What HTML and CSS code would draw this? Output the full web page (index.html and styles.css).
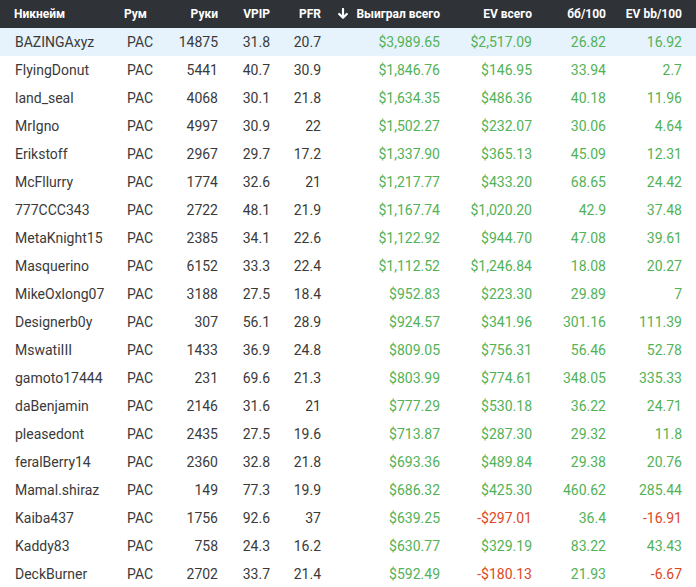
FILE: index.html
```html
<!DOCTYPE html>
<html lang="ru">
<head>
<meta charset="utf-8">
<link rel="stylesheet" href="styles.css">
</head>
<body>
<table class="stats">
<colgroup>
<col class="c-name"><col class="c-room"><col class="c-hands"><col class="c-vpip"><col class="c-pfr"><col class="c-won"><col class="c-ev"><col class="c-bb"><col class="c-evbb">
</colgroup>
<thead>
<tr>
<th class="l">Никнейм</th><th class="l">Рум</th><th>Руки</th><th>VPIP</th><th>PFR</th><th><svg class="arrow" width="10" height="11" viewBox="0 0 10 11"><path d="M5 1 V9.5 M1.2 6 L5 9.8 L8.8 6" fill="none" stroke="#ffffff" stroke-width="2.2" stroke-linecap="round" stroke-linejoin="round"/></svg>Выиграл всего</th><th>EV всего</th><th>бб/100</th><th>EV bb/100</th>
</tr>
</thead>
<tbody>
<tr class="hl"><td class="l">BAZINGAxyz</td><td class="l">PAC</td><td>14875</td><td>31.8</td><td>20.7</td><td class="g">$3,989.65</td><td class="g">$2,517.09</td><td class="g">26.82</td><td class="g">16.92</td></tr>
<tr><td class="l">FlyingDonut</td><td class="l">PAC</td><td>5441</td><td>40.7</td><td>30.9</td><td class="g">$1,846.76</td><td class="g">$146.95</td><td class="g">33.94</td><td class="g">2.7</td></tr>
<tr><td class="l">land_seal</td><td class="l">PAC</td><td>4068</td><td>30.1</td><td>21.8</td><td class="g">$1,634.35</td><td class="g">$486.36</td><td class="g">40.18</td><td class="g">11.96</td></tr>
<tr><td class="l">MrIgno</td><td class="l">PAC</td><td>4997</td><td>30.9</td><td>22</td><td class="g">$1,502.27</td><td class="g">$232.07</td><td class="g">30.06</td><td class="g">4.64</td></tr>
<tr><td class="l">Erikstoff</td><td class="l">PAC</td><td>2967</td><td>29.7</td><td>17.2</td><td class="g">$1,337.90</td><td class="g">$365.13</td><td class="g">45.09</td><td class="g">12.31</td></tr>
<tr><td class="l">McFllurry</td><td class="l">PAC</td><td>1774</td><td>32.6</td><td>21</td><td class="g">$1,217.77</td><td class="g">$433.20</td><td class="g">68.65</td><td class="g">24.42</td></tr>
<tr><td class="l">777CCC343</td><td class="l">PAC</td><td>2722</td><td>48.1</td><td>21.9</td><td class="g">$1,167.74</td><td class="g">$1,020.20</td><td class="g">42.9</td><td class="g">37.48</td></tr>
<tr><td class="l">MetaKnight15</td><td class="l">PAC</td><td>2385</td><td>34.1</td><td>22.6</td><td class="g">$1,122.92</td><td class="g">$944.70</td><td class="g">47.08</td><td class="g">39.61</td></tr>
<tr><td class="l">Masquerino</td><td class="l">PAC</td><td>6152</td><td>33.3</td><td>22.4</td><td class="g">$1,112.52</td><td class="g">$1,246.84</td><td class="g">18.08</td><td class="g">20.27</td></tr>
<tr><td class="l">MikeOxlong07</td><td class="l">PAC</td><td>3188</td><td>27.5</td><td>18.4</td><td class="g">$952.83</td><td class="g">$223.30</td><td class="g">29.89</td><td class="g">7</td></tr>
<tr><td class="l">Designerb0y</td><td class="l">PAC</td><td>307</td><td>56.1</td><td>28.9</td><td class="g">$924.57</td><td class="g">$341.96</td><td class="g">301.16</td><td class="g">111.39</td></tr>
<tr><td class="l">MswatiIII</td><td class="l">PAC</td><td>1433</td><td>36.9</td><td>24.8</td><td class="g">$809.05</td><td class="g">$756.31</td><td class="g">56.46</td><td class="g">52.78</td></tr>
<tr><td class="l">gamoto17444</td><td class="l">PAC</td><td>231</td><td>69.6</td><td>21.3</td><td class="g">$803.99</td><td class="g">$774.61</td><td class="g">348.05</td><td class="g">335.33</td></tr>
<tr><td class="l">daBenjamin</td><td class="l">PAC</td><td>2146</td><td>31.6</td><td>21</td><td class="g">$777.29</td><td class="g">$530.18</td><td class="g">36.22</td><td class="g">24.71</td></tr>
<tr><td class="l">pleasedont</td><td class="l">PAC</td><td>2435</td><td>27.5</td><td>19.6</td><td class="g">$713.87</td><td class="g">$287.30</td><td class="g">29.32</td><td class="g">11.8</td></tr>
<tr><td class="l">feralBerry14</td><td class="l">PAC</td><td>2360</td><td>32.8</td><td>21.8</td><td class="g">$693.36</td><td class="g">$489.84</td><td class="g">29.38</td><td class="g">20.76</td></tr>
<tr><td class="l">Mamal.shiraz</td><td class="l">PAC</td><td>149</td><td>77.3</td><td>19.9</td><td class="g">$686.32</td><td class="g">$425.30</td><td class="g">460.62</td><td class="g">285.44</td></tr>
<tr><td class="l">Kaiba437</td><td class="l">PAC</td><td>1756</td><td>92.6</td><td>37</td><td class="g">$639.25</td><td class="r">-$297.01</td><td class="g">36.4</td><td class="r">-16.91</td></tr>
<tr><td class="l">Kaddy83</td><td class="l">PAC</td><td>758</td><td>24.3</td><td>16.2</td><td class="g">$630.77</td><td class="g">$329.19</td><td class="g">83.22</td><td class="g">43.43</td></tr>
<tr><td class="l">DeckBurner</td><td class="l">PAC</td><td>2702</td><td>33.7</td><td>21.4</td><td class="g">$592.49</td><td class="r">-$180.13</td><td class="g">21.93</td><td class="r">-6.67</td></tr>
</tbody>
</table>
</body>
</html>
```
FILE: styles.css
```css
html, body {
  margin: 0;
  padding: 0;
  background: #ffffff;
}
body {
  font-family: Roboto, "Liberation Sans", sans-serif;
  overflow: hidden;
}
.stats {
  border-collapse: collapse;
  table-layout: fixed;
  width: 696px;
}
.c-name { width: 110px; }
.c-room { width: 58px; }
.c-hands { width: 64px; }
.c-vpip { width: 52px; }
.c-pfr { width: 51px; }
.c-won { width: 119px; }
.c-ev { width: 92px; }
.c-bb { width: 74px; }
.c-evbb { width: 76px; }
.stats th {
  background: #2f3237;
  color: #ffffff;
  font-size: 12px;
  font-weight: 700;
  height: 28px;
  padding: 0 14px 0 0;
  text-align: right;
  white-space: nowrap;
}
.stats td {
  height: 28px;
  padding: 0 14px 0 0;
  font-size: 14px;
  color: #3a3a3a;
  text-align: right;
  white-space: nowrap;
}
.stats .l {
  text-align: left;
  padding-left: 14px;
  padding-right: 0;
}
.stats td.l:first-child { padding-left: 15px; }
.stats td.l:nth-child(2) { padding-left: 17px; }
.stats tr.hl td { background: #e6f3fc; }
.stats td.g { color: #53b257; }
.stats td.r { color: #de4724; }
.arrow {
  vertical-align: -1px;
  margin-right: 8px;
}
```
